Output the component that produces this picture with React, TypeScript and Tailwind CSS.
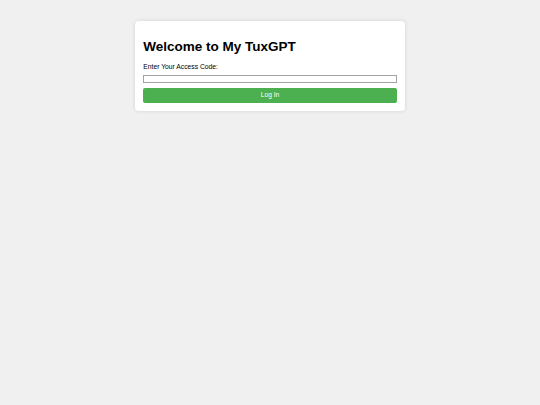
import { useState } from 'react'

export default function App() {
  const [code, setCode] = useState('')

  return (
    <div className="min-h-[405px] w-full bg-[#f0f0f0] pt-[21px] font-['Liberation_Sans',Arial,sans-serif] text-black">
      <div className="mx-auto w-[270px] rounded-[4px] bg-white p-[8.33px] shadow-[0_0_4px_rgba(0,0,0,0.12)]">
        <h1 className="mt-[9.9px] mb-[8px] text-[13.5px] font-bold leading-[15.3px]">Welcome to My TuxGPT</h1>
        <label className="block text-[6.75px] leading-[7.7px]">Enter Your Access Code:</label>
        <input
          type="password"
          value={code}
          onChange={(e) => setCode(e.target.value)}
          className="mt-[4.6px] block h-[8.6px] w-full border border-[#a3a3a3] bg-white outline-none"
        />
        <button className="mt-[4.4px] flex h-[15px] w-full items-center justify-center rounded-[2px] bg-[#4CAF50] text-[6.67px] leading-[7.7px] text-white">
          Log In
        </button>
      </div>
    </div>
  )
}
